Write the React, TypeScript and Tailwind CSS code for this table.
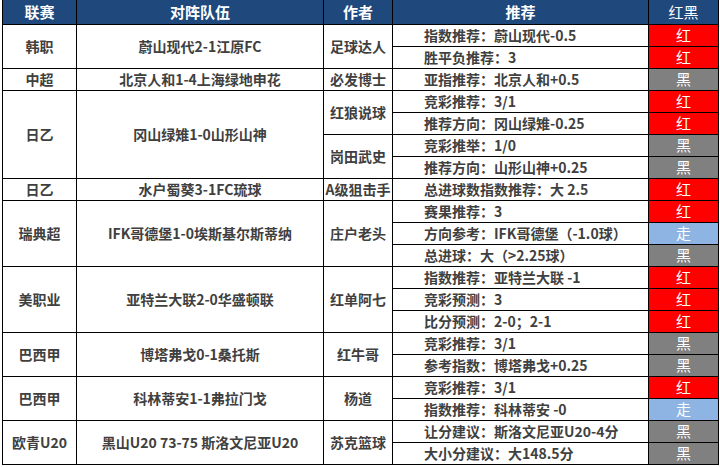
import React from 'react'

type Pick = { text: string; result: '红' | '黑' | '走' }
type Author = { name: string; picks: Pick[] }
type Match = { league: string; teams: string; authors: Author[] }

const matches: Match[] = [
  {
    league: '韩职',
    teams: '蔚山现代2-1江原FC',
    authors: [
      {
        name: '足球达人',
        picks: [
          { text: '指数推荐：蔚山现代-0.5', result: '红' },
          { text: '胜平负推荐：3', result: '红' },
        ],
      },
    ],
  },
  {
    league: '中超',
    teams: '北京人和1-4上海绿地申花',
    authors: [{ name: '必发博士', picks: [{ text: '亚指推荐：北京人和+0.5', result: '黑' }] }],
  },
  {
    league: '日乙',
    teams: '冈山绿雉1-0山形山神',
    authors: [
      {
        name: '红狼说球',
        picks: [
          { text: '竞彩推荐：3/1', result: '红' },
          { text: '推荐方向：冈山绿雉-0.25', result: '红' },
        ],
      },
      {
        name: '岗田武史',
        picks: [
          { text: '竞彩推举：1/0', result: '黑' },
          { text: '推荐方向：山形山神+0.25', result: '黑' },
        ],
      },
    ],
  },
  {
    league: '日乙',
    teams: '水户蜀葵3-1FC琉球',
    authors: [{ name: 'A级狙击手', picks: [{ text: '总进球数指数推荐：大 2.5', result: '红' }] }],
  },
  {
    league: '瑞典超',
    teams: 'IFK哥德堡1-0埃斯基尔斯蒂纳',
    authors: [
      {
        name: '庄户老头',
        picks: [
          { text: '赛果推荐：3', result: '红' },
          { text: '方向参考：IFK哥德堡（-1.0球）', result: '走' },
          { text: '总进球：大（>2.25球）', result: '黑' },
        ],
      },
    ],
  },
  {
    league: '美职业',
    teams: '亚特兰大联2-0华盛顿联',
    authors: [
      {
        name: '红单阿七',
        picks: [
          { text: '指数推荐：亚特兰大联 -1', result: '红' },
          { text: '竞彩预测：3', result: '红' },
          { text: '比分预测：2-0；2-1', result: '红' },
        ],
      },
    ],
  },
  {
    league: '巴西甲',
    teams: '博塔弗戈0-1桑托斯',
    authors: [
      {
        name: '红牛哥',
        picks: [
          { text: '竞彩推荐：3/1', result: '黑' },
          { text: '参考指数：博塔弗戈+0.25', result: '黑' },
        ],
      },
    ],
  },
  {
    league: '巴西甲',
    teams: '科林蒂安1-1弗拉门戈',
    authors: [
      {
        name: '杨道',
        picks: [
          { text: '竞彩推荐：3/1', result: '红' },
          { text: '指数推荐：科林蒂安 -0', result: '走' },
        ],
      },
    ],
  },
  {
    league: '欧青U20',
    teams: '黑山U20 73-75 斯洛文尼亚U20',
    authors: [
      {
        name: '苏克篮球',
        picks: [
          { text: '让分建议：斯洛文尼亚U20-4分', result: '黑' },
          { text: '大小分建议：大148.5分', result: '黑' },
        ],
      },
    ],
  },
]

const resultBg = {
  红: 'bg-[#ff0000]',
  黑: 'bg-[#808080]',
  走: 'bg-[#8db4e2]',
}

const cell = 'border border-black p-0 whitespace-nowrap'

export default function App() {
  return (
    <div
      className="w-[720px] h-[467px] bg-white overflow-hidden pl-[2px]"
      style={{ fontFamily: '"Noto Sans CJK SC", "Noto Sans", sans-serif' }}
    >
      <table className="border-collapse table-fixed w-[716px] text-[14px] font-bold text-[#404040]">
        <colgroup>
          <col className="w-[74px]" />
          <col className="w-[247px]" />
          <col className="w-[69px]" />
          <col className="w-[256px]" />
          <col className="w-[70px]" />
        </colgroup>
        <thead>
          <tr className="h-[24px] bg-[#1f497d] text-white text-[15px]">
            <th className={`${cell} border-t-0`}>联赛</th>
            <th className={`${cell} border-t-0`}>对阵队伍</th>
            <th className={`${cell} border-t-0`}>作者</th>
            <th className={`${cell} border-t-0`}>推荐</th>
            <th className={`${cell} border-t-0 font-normal`}>红黑</th>
          </tr>
        </thead>
        <tbody>
          {matches.map((m, mi) => {
            const total = m.authors.reduce((n, a) => n + a.picks.length, 0)
            return m.authors.map((a, ai) =>
              a.picks.map((p, pi) => (
                <tr key={`${mi}-${ai}-${pi}`} className="h-[22px] leading-[20px]">
                  {ai === 0 && pi === 0 && (
                    <>
                      <td rowSpan={total} className={`${cell} text-center`}>
                        {m.league}
                      </td>
                      <td rowSpan={total} className={`${cell} text-center`}>
                        {m.teams}
                      </td>
                    </>
                  )}
                  {pi === 0 && (
                    <td rowSpan={a.picks.length} className={`${cell} text-center overflow-visible`}>
                      {a.name}
                    </td>
                  )}
                  <td className={`${cell} pl-[31px] text-left`}>{p.text}</td>
                  <td
                    className={`${cell} ${resultBg[p.result]} text-center text-white font-normal text-[15px]`}
                  >
                    {p.result}
                  </td>
                </tr>
              ))
            )
          })}
        </tbody>
      </table>
    </div>
  )
}
